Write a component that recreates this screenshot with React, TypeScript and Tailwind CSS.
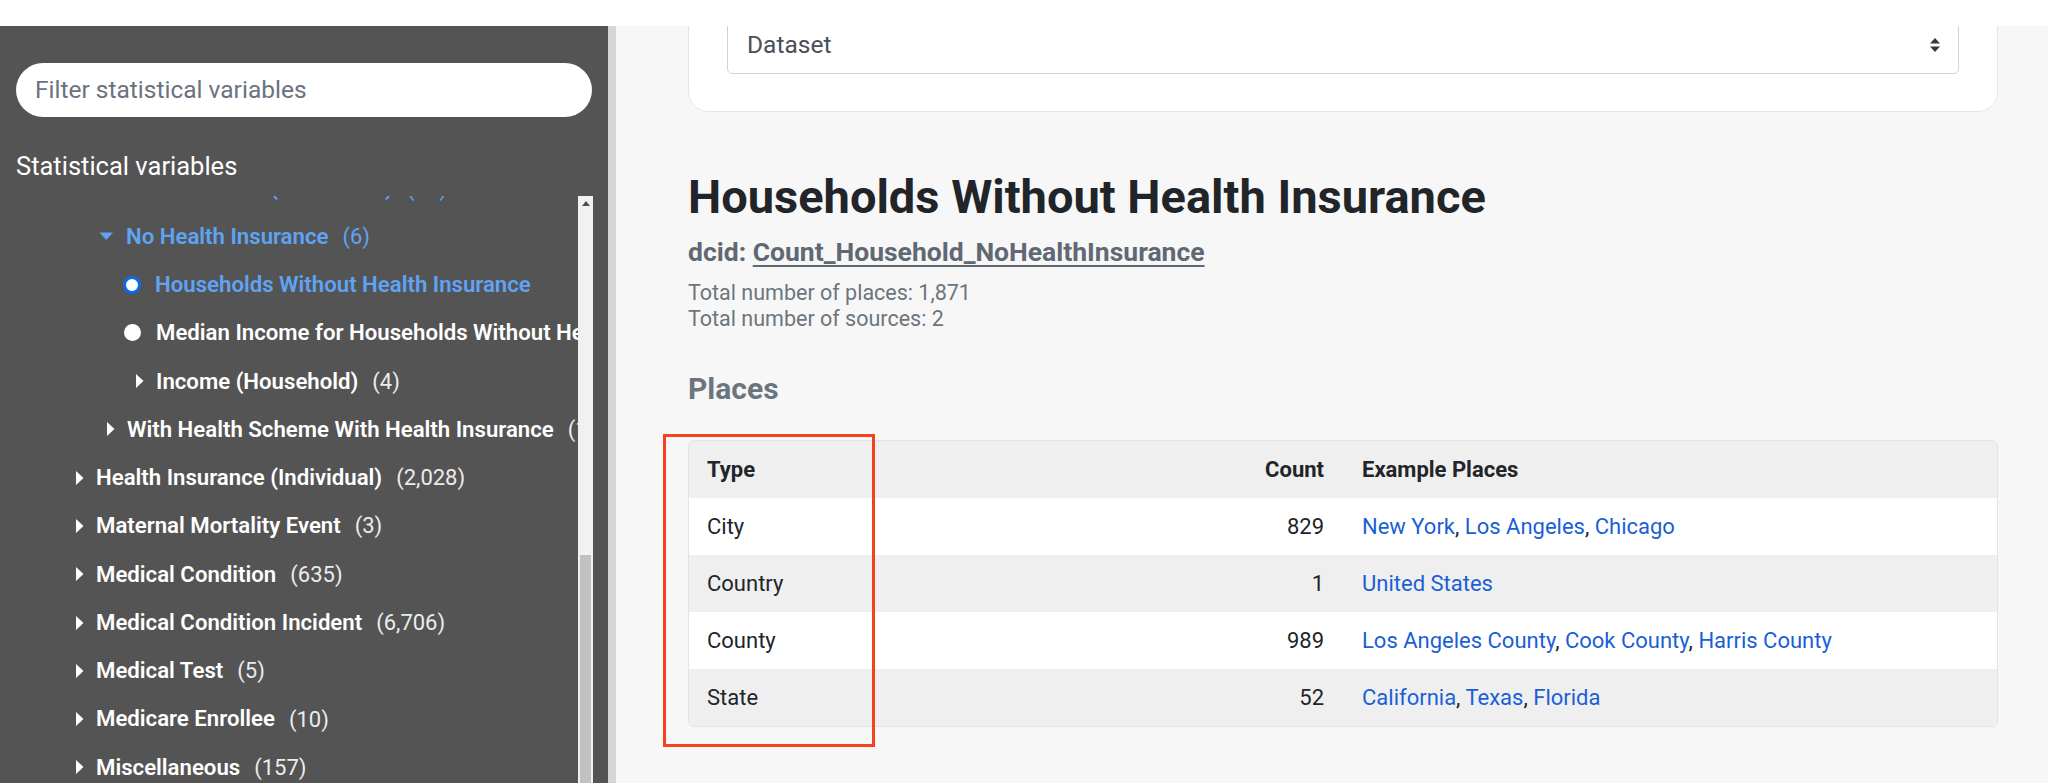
import React from "react";

type Row = {
  kind: "tri" | "radio";
  open?: boolean;
  selected?: boolean;
  pad: string;
  label: string;
  count?: string;
  blue?: boolean;
};

const rows: Row[] = [
  { kind: "tri", open: true, pad: "pl-[69px]", label: "Health Insurance (Household)", count: "(24)", blue: true },
  { kind: "tri", open: true, pad: "pl-[99px]", label: "No Health Insurance", count: "(6)", blue: true },
  { kind: "radio", selected: true, pad: "pl-[123px]", label: "Households Without Health Insurance", blue: true },
  { kind: "radio", pad: "pl-[124px]", label: "Median Income for Households Without Health Insurance" },
  { kind: "tri", pad: "pl-[129px]", label: "Income (Household)", count: "(4)" },
  { kind: "tri", pad: "pl-[100px]", label: "With Health Scheme With Health Insurance", count: "(12)" },
  { kind: "tri", pad: "pl-[69px]", label: "Health Insurance (Individual)", count: "(2,028)" },
  { kind: "tri", pad: "pl-[69px]", label: "Maternal Mortality Event", count: "(3)" },
  { kind: "tri", pad: "pl-[69px]", label: "Medical Condition", count: "(635)" },
  { kind: "tri", pad: "pl-[69px]", label: "Medical Condition Incident", count: "(6,706)" },
  { kind: "tri", pad: "pl-[69px]", label: "Medical Test", count: "(5)" },
  { kind: "tri", pad: "pl-[69px]", label: "Medicare Enrollee", count: "(10)" },
  { kind: "tri", pad: "pl-[69px]", label: "Miscellaneous", count: "(157)" },
  { kind: "tri", pad: "pl-[69px]", label: "Mortality Event", count: "(1,203)" },
];

function Triangle({ open, color }: { open?: boolean; color: string }) {
  return (
    <span className="w-[27px] flex items-center shrink-0">
      {open ? (
        <svg width="15" height="14" viewBox="0 0 15 14">
          <polygon points="0.5,3.5 14,3.5 7.25,11" fill={color} />
        </svg>
      ) : (
        <svg width="16" height="14" viewBox="0 0 16 14">
          <polygon points="7,0 14.5,7 7,14" fill={color} />
        </svg>
      )}
    </span>
  );
}

function SideRow({ r }: { r: Row }) {
  return (
    <div className={`flex items-center h-[48.27px] whitespace-nowrap ${r.pad}`}>
      {r.kind === "tri" ? (
        <Triangle open={r.open} color={r.blue ? "#5fa4f4" : "#ffffff"} />
      ) : (
        <span className="w-[32px] flex items-center shrink-0">
          {r.selected ? (
            <span className="block w-[18px] h-[18px] rounded-full bg-white border-[3.5px] border-[#0b6bf0]" />
          ) : (
            <span className="block w-[17px] h-[17px] rounded-full bg-white" />
          )}
        </span>
      )}
      <span className={`font-semibold text-[22.2px] ${r.blue ? "text-[#5fa4f4]" : "text-white"}`}>{r.label}</span>
      {r.count && (
        <span className={`ml-[14px] text-[22px] ${r.blue ? "text-[#5fa4f4]" : "text-[#ececec]"}`}>{r.count}</span>
      )}
    </div>
  );
}

const tableRows = [
  { type: "City", count: "829", places: ["New York", "Los Angeles", "Chicago"], bg: "bg-white" },
  { type: "Country", count: "1", places: ["United States"], bg: "bg-[#efefef]" },
  { type: "County", count: "989", places: ["Los Angeles County", "Cook County", "Harris County"], bg: "bg-white" },
  { type: "State", count: "52", places: ["California", "Texas", "Florida"], bg: "bg-[#efefef]" },
];

export default function App() {
  return (
    <div className="w-[2048px] h-[783px] overflow-hidden flex flex-col font-[Roboto,sans-serif] bg-white">
      <div className="h-[26px] bg-white shrink-0 relative z-10" />
      <div className="flex flex-1 min-h-0">
        {/* Sidebar */}
        <aside className="w-[608px] shrink-0 bg-[#545454] flex flex-col">
          <div className="pt-[37px] pl-[16px]">
            <div className="h-[54px] w-[576px] rounded-full bg-white flex items-center pl-[19px] text-[24.5px] text-[#6b7280]">
              Filter statistical variables
            </div>
          </div>
          <div className="mt-[34px] pl-[16px] text-[25.5px] leading-[30px] text-white">Statistical variables</div>
          <div className="mt-[15px] flex-1 min-h-0 flex pr-[15px]">
            <div className="flex-1 min-w-0 overflow-hidden">
              <div className="-mt-[32px]">
                {rows.map((r, i) => (
                  <SideRow key={i} r={r} />
                ))}
              </div>
            </div>
            <div className="w-[15px] bg-[#f1f1f1] flex flex-col items-center shrink-0">
              <div className="h-[15px] w-full flex items-center justify-center">
                <svg width="8" height="5" viewBox="0 0 8 5">
                  <polygon points="0,5 8,5 4,0" fill="#505050" />
                </svg>
              </div>
              <div className="h-[344px]" />
              <div className="flex-1 w-[11px] bg-[#c1c1c1]" />
            </div>
          </div>
        </aside>
        <div className="w-[8px] shrink-0 bg-[#d6d6d6]" />
        {/* Main */}
        <main className="flex-1 min-w-0 bg-[#f7f7f7] overflow-hidden pl-[72px] pr-[50px] text-[#212529]">
          <div className="-mt-[40px] bg-white border border-[#e5e5e5] rounded-[20px] px-[38px] pt-[29px] pb-[37px]">
            <div className="h-[58px] border border-[#ced4da] rounded-[5px] flex items-center justify-between pl-[19px] pr-[17px] bg-white">
              <span className="text-[24.5px] text-[#495057]">Dataset</span>
              <svg width="12" height="18" viewBox="0 0 12 18">
                <polygon points="1,7.5 11,7.5 6,2" fill="#343a40" />
                <polygon points="1,10.5 11,10.5 6,16" fill="#343a40" />
              </svg>
            </div>
          </div>

          <h1 className="mt-[59px] text-[47px] leading-[52px] font-bold text-[#212529]">
            Households Without Health Insurance
          </h1>
          <div className="mt-[13px] text-[26.5px] leading-[32px] font-bold text-[#5f6873]">
            dcid: <span className="underline underline-offset-[4px]">Count_Household_NoHealthInsurance</span>
          </div>
          <div className="mt-[12px] text-[21.5px] leading-[26px] text-[#6c757d]">
            <div>Total number of places: 1,871</div>
            <div>Total number of sources: 2</div>
          </div>
          <div className="mt-[39px] text-[30px] leading-[36px] font-bold text-[#6c757d]">Places</div>

          <div className="mt-[33px] relative">
            <div className="border border-[#e3e3e3] rounded-[6px] overflow-hidden text-[22px]">
              <div className="grid grid-cols-[1fr_110px_654px] h-[57px] items-center bg-[#efefef] font-bold">
                <div className="pl-[18px]">Type</div>
                <div className="text-right pr-[19px]">Count</div>
                <div className="pl-[19px]">Example Places</div>
              </div>
              {tableRows.map((r) => (
                <div key={r.type} className={`grid grid-cols-[1fr_110px_654px] h-[57px] items-center ${r.bg}`}>
                  <div className="pl-[18px]">{r.type}</div>
                  <div className="text-right pr-[19px]">{r.count}</div>
                  <div className="pl-[19px]">
                    {r.places.map((p, i) => (
                      <React.Fragment key={p}>
                        <span className="text-[#1a5fd6]">{p}</span>
                        {i < r.places.length - 1 && <span>, </span>}
                      </React.Fragment>
                    ))}
                  </div>
                </div>
              ))}
            </div>
            <div className="absolute left-[-25px] top-[-6px] w-[212px] h-[313px] border-[3px] border-[#f4411e] pointer-events-none" />
          </div>
        </main>
      </div>
    </div>
  );
}
